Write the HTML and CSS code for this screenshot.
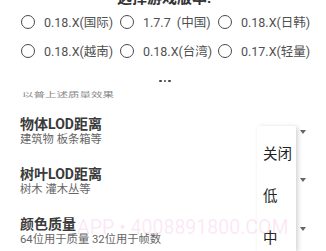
FILE: index.html
```html
<!DOCTYPE html>
<html lang="zh">
<head>
<meta charset="utf-8">
<link rel="stylesheet" href="styles.css">
</head>
<body>
<div class="page">
  <div class="title">选择游戏版本:</div>
  <div class="radios">
    <div class="opt"><span class="radio"></span><span>0.18.X(国际)</span></div>
    <div class="opt"><span class="radio"></span><span>1.7.7&nbsp;&nbsp;(中国)</span></div>
    <div class="opt"><span class="radio"></span><span>0.18.X(日韩)</span></div>
    <div class="opt"><span class="radio"></span><span>0.18.X(越南)</span></div>
    <div class="opt"><span class="radio"></span><span>0.18.X(台湾)</span></div>
    <div class="opt"><span class="radio"></span><span>0.17.X(轻量)</span></div>
  </div>
  <div class="more"><i></i><i></i><i></i></div>
  <div class="note"><span>以普上述质量效果</span></div>
  <div class="settings">
    <div class="setting">
      <div class="s-title">物体LOD距离</div>
      <div class="s-sub">建筑物 板条箱等</div>
    </div>
    <div class="setting">
      <div class="s-title">树叶LOD距离</div>
      <div class="s-sub">树木 灌木丛等</div>
    </div>
    <div class="setting">
      <div class="s-title">颜色质量</div>
      <div class="s-sub">64位用于质量 32位用于帧数</div>
    </div>
  </div>
</div>
<div class="arrow a1"></div>
<div class="arrow a2"></div>
<div class="arrow a3"></div>
<div class="popup">
  <div class="item">关闭</div>
  <div class="item">低</div>
  <div class="item">中</div>
</div>
<div class="watermark">APP • 4008891800.COM</div>
</body>
</html>
```
FILE: styles.css
```css
html, body {
  margin: 0;
  padding: 0;
  background: #fff;
  width: 326px;
  height: 251px;
  overflow: hidden;
  position: relative;
  font-family: Roboto, "Noto Sans CJK SC", sans-serif;
}
.page {
  display: flex;
  flex-direction: column;
}
.title {
  margin-top: -11px;
  height: 18px;
  line-height: 18px;
  font-size: 15px;
  font-weight: 700;
  color: #333;
  text-align: center;
  padding-left: 2px;
}
.radios {
  display: grid;
  grid-template-columns: 99px 98px auto;
  grid-auto-rows: 29px;
  padding-left: 21px;
}
.opt {
  display: flex;
  align-items: center;
  gap: 9px;
  font-size: 12.5px;
  color: #505050;
  white-space: nowrap;
}
.radio {
  width: 12px;
  height: 12px;
  border: 1.7px solid #4a4a4a;
  border-radius: 50%;
  flex: none;
}
.more {
  height: 26px;
  display: flex;
  justify-content: center;
  align-items: center;
  gap: 2px;
  padding-left: 4px;
  padding-top: 6px;
  box-sizing: border-box;
}
.more i {
  width: 2.5px;
  height: 2.5px;
  border-radius: 50%;
  background: #444;
}
.note {
  height: 8px;
  line-height: 8px;
  padding-left: 22px;
  font-size: 11.5px;
  color: #888;
}
.note span {
  display: inline-block;
  transform: scaleY(0.55);
  transform-origin: center;
}
.settings {
  padding-top: 16px;
  padding-left: 20px;
  display: flex;
  flex-direction: column;
  gap: 18px;
}
.s-title {
  font-size: 14px;
  font-weight: 700;
  line-height: 18px;
  color: #3a3a3a;
}
.s-sub {
  font-size: 11.3px;
  line-height: 14px;
  color: #666;
}
.arrow {
  position: absolute;
  left: 300px;
  width: 0;
  height: 0;
  border-left: 3.5px solid transparent;
  border-right: 3.5px solid transparent;
  border-top: 4px solid #666;
}
.a1 { top: 130px; }
.a2 { top: 178px; }
.a3 { top: 227px; }
.popup {
  position: absolute;
  left: 257px;
  top: 126px;
  width: 39px;
  height: 125px;
  background: #fff;
  border-radius: 2px 2px 0 0;
  box-shadow: 2px 1px 5px rgba(0, 0, 0, 0.18);
  padding-top: 8px;
  box-sizing: border-box;
  overflow: hidden;
}
.item {
  height: 42px;
  line-height: 42px;
  padding-left: 6px;
  font-size: 14.5px;
  color: #222;
}
.watermark {
  position: absolute;
  left: 77px;
  top: 217px;
  font-size: 19.5px;
  line-height: 22px;
  color: rgba(240, 150, 210, 0.22);
  white-space: nowrap;
  pointer-events: none;
}
```
